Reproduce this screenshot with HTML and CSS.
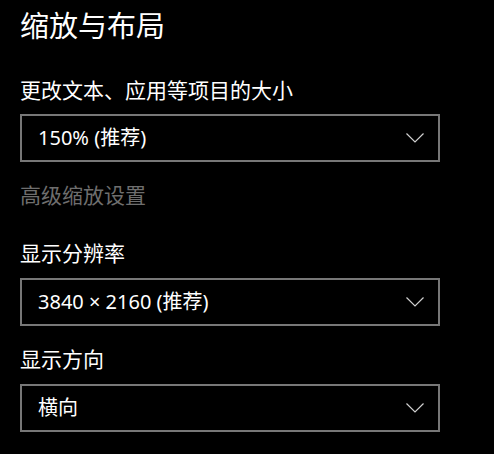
FILE: index.html
```html
<!DOCTYPE html>
<html lang="zh-CN">
<head>
<meta charset="utf-8">
<link rel="stylesheet" href="styles.css">
</head>
<body>
<main class="page">
  <h1 class="title">缩放与布局</h1>

  <div class="label label-first">更改文本、应用等项目的大小</div>
  <div class="select">
    <span class="select-text">150% (推荐)</span>
    <svg class="chevron" width="18" height="10" viewBox="0 0 18 10"><path d="M0.5 0.5 L9 9 L17.5 0.5" fill="none" stroke="#d0d0d0" stroke-width="1.2"/></svg>
  </div>

  <div class="link">高级缩放设置</div>

  <div class="label label-second">显示分辨率</div>
  <div class="select">
    <span class="select-text">3840 × 2160 (推荐)</span>
    <svg class="chevron" width="18" height="10" viewBox="0 0 18 10"><path d="M0.5 0.5 L9 9 L17.5 0.5" fill="none" stroke="#d0d0d0" stroke-width="1.2"/></svg>
  </div>

  <div class="label label-third">显示方向</div>
  <div class="select">
    <span class="select-text">横向</span>
    <svg class="chevron" width="18" height="10" viewBox="0 0 18 10"><path d="M0.5 0.5 L9 9 L17.5 0.5" fill="none" stroke="#d0d0d0" stroke-width="1.2"/></svg>
  </div>
</main>
</body>
</html>
```

FILE: styles.css
```css
html, body {
  margin: 0;
  padding: 0;
  background: #000;
}

body {
  font-family: "Noto Sans", "Noto Sans CJK SC", sans-serif;
  color: #fff;
}

.page {
  display: flex;
  flex-direction: column;
  align-items: flex-start;
  padding: 6px 0 0 20px;
}

.title {
  margin: 0;
  font-size: 29px;
  font-weight: 400;
  line-height: 40px;
}

.label {
  font-size: 21px;
  line-height: 30px;
}

.label-first {
  margin-top: 29px;
}

.label-second {
  margin-top: 28px;
}

.label-third {
  margin-top: 18px;
}

.select {
  box-sizing: border-box;
  width: 420px;
  height: 48px;
  margin-top: 9px;
  border: 2px solid #777;
  display: flex;
  align-items: center;
  justify-content: space-between;
  padding: 0 14px 0 16px;
}

.label + .select {
  margin-top: 10px;
}

.label-first + .select {
  margin-top: 9px;
}

.select-text {
  font-size: 20px;
  line-height: 28px;
}

.chevron {
  display: block;
}

.link {
  margin-top: 18px;
  font-size: 21px;
  line-height: 30px;
  color: #6e6e6e;
}
```
